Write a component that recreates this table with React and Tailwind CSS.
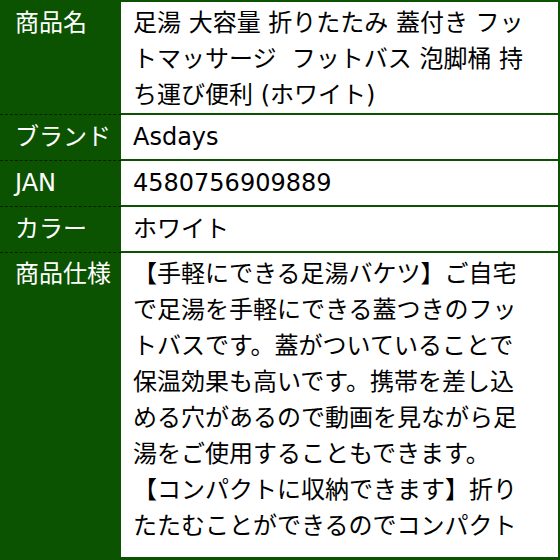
const rows = [
  {
    label: "商品名",
    h: "h-[113px]",
    lines: [
      "足湯 大容量 折りたたみ 蓋付き フッ",
      "トマッサージ  フットバス 泡脚桶 持",
      "ち運び便利 (ホワイト)",
    ],
    pt: "pt-[3px]",
  },
  { label: "ブランド", h: "h-[46px]", lines: ["Asdays"], pt: "pt-[4px]" },
  { label: "JAN", h: "h-[46px]", lines: ["4580756909889"], pt: "pt-[4px]" },
  { label: "カラー", h: "h-[46px]", lines: ["ホワイト"], pt: "pt-[4px]" },
];

const spec = [
  "【手軽にできる足湯バケツ】ご自宅",
  "で足湯を手軽にできる蓋つきのフッ",
  "トバスです。蓋がついていることで",
  "保温効果も高いです。携帯を差し込",
  "める穴があるので動画を見ながら足",
  "湯をご使用することもできます。",
  "【コンパクトに収納できます】折り",
  "たたむことができるのでコンパクト",
];

const font = {
  fontFamily: '"DejaVu Sans", "Noto Sans CJK JP", sans-serif',
};

export default function App() {
  return (
    <div
      className="flex h-[560px] w-[560px] flex-col overflow-hidden bg-[#0b5300] pt-[2px] pr-[2px] text-[24px] leading-[36px]"
      style={font}
    >
      {rows.map((row) => (
        <div key={row.label} className={`flex shrink-0 ${row.h}`}>
          <div
            className={`w-[121px] shrink-0 border-b border-dashed border-[#031f00] pl-[15px] text-white ${row.pt}`}
          >
            {row.label}
          </div>
          <div className="flex flex-1 flex-col pb-[2px]">
            <div className={`flex-1 bg-white pl-[12px] text-black ${row.pt}`}>
              {row.lines.map((l) => (
                <div key={l} className="whitespace-pre">
                  {l}
                </div>
              ))}
            </div>
          </div>
        </div>
      ))}
      <div className="flex min-h-0 flex-1 pb-[3px]">
        <div className="w-[121px] shrink-0 pl-[15px] pt-[3px] text-white">
          商品仕様
        </div>
        <div className="flex-1 overflow-hidden bg-white pl-[12px] pt-[3px] text-black">
          {spec.map((l) => (
            <div key={l} className="whitespace-pre">
              {l}
            </div>
          ))}
        </div>
      </div>
    </div>
  );
}
